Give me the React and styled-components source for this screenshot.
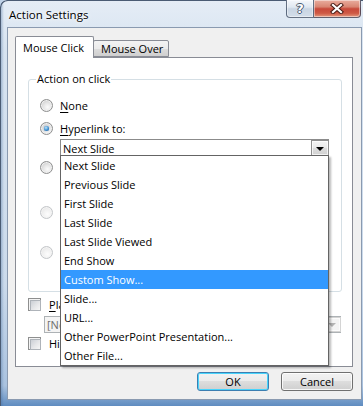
import React from "react";
import styled, { createGlobalStyle } from "styled-components";

const UI_FONT = `"Open Sans", "Noto Sans", "Liberation Sans", sans-serif`;

const GlobalStyle = createGlobalStyle`
	html, body {
		margin: 0;
		padding: 0;
	}
	body {
		width: 363px;
		height: 406px;
		overflow: hidden;
		background: #bfd2e8;
	}
	* {
		box-sizing: border-box;
	}
`;

const Window = styled.div`
	width: 363px;
	height: 406px;
	display: flex;
	flex-direction: column;
	padding: 0 1px 6px 7px;
	border-top-left-radius: 7px;
	box-shadow: inset 1px 1px 0 #4b5c74;
	background:
		linear-gradient(90deg, rgba(60, 100, 150, 0.45) 0, rgba(255, 255, 255, 0) 4px),
		linear-gradient(180deg, #e5edf6 0%, #d7e3f0 12%, #cbdaeb 70%, #a9c2df 95%, #5f8cc0 100%);
	font-family: ${UI_FONT};
	font-size: 11px;
	color: #000;
`;

const TitleBar = styled.div`
	height: 27px;
	flex: none;
	display: flex;
	justify-content: space-between;
	align-items: flex-start;
`;

const Title = styled.div`
	padding: 7px 0 0 2px;
	font-size: 11.5px;
	line-height: 16px;
	text-shadow: 0 0 6px #fff, 0 0 3px #fff;
`;

const Caption = styled.div`
	display: flex;
	margin-right: 1px;
`;

const CaptionButton = styled.div`
	height: 18px;
	width: ${(p) => p.$w}px;
	display: flex;
	align-items: center;
	justify-content: center;
	border: 1px solid rgba(55, 70, 92, 0.75);
	border-top: none;
	border-left-width: ${(p) => (p.$close ? 0 : 1)}px;
	border-radius: ${(p) => (p.$close ? "0 0 4px 0" : "0 0 0 4px")};
	background: ${(p) =>
		p.$close
			? "linear-gradient(180deg, #e9ad9f 0%, #d98673 40%, #c8493a 52%, #cf5a45 78%, #e49a7f 100%)"
			: "linear-gradient(180deg, #f4f7fb 0%, #e0e8f1 42%, #c9d5e3 52%, #d3deea 100%)"};
	box-shadow: inset 0 0 0 1px rgba(255, 255, 255, 0.45);
`;

const HelpGlyph = styled.span`
	font-family: "DejaVu Sans", sans-serif;
	font-weight: bold;
	font-size: 13px;
	line-height: 1;
	color: #fff;
	text-shadow: -1px 0 #485a70, 1px 0 #485a70, 0 -1px #485a70, 0 1px #485a70;
`;

const Client = styled.div`
	flex: 1;
	display: flex;
	flex-direction: column;
	background: #f0f0f0;
	border: 1px solid #8a9ab0;
	padding: 8px 8px 8px 7px;
`;

const TabStrip = styled.div`
	height: 21px;
	flex: none;
	display: flex;
	align-items: flex-end;
	position: relative;
	z-index: 1;
`;

const Tab = styled.div`
	height: ${(p) => (p.$active ? 22 : 17)}px;
	margin-bottom: ${(p) => (p.$active ? -1 : 0)}px;
	margin-left: ${(p) => (p.$active ? 0 : -1)}px;
	padding: ${(p) => (p.$active ? "3px 9px 0 7px" : "0 5px 0 7px")};
	line-height: 16px;
	border: 1px solid #898c95;
	border-bottom: ${(p) => (p.$active ? "none" : "1px solid #898c95")};
	background: ${(p) =>
		p.$active ? "#fff" : "linear-gradient(180deg, #f3f3f3 0%, #ebebeb 50%, #dddddd 51%, #cfcfcf 100%)"};
	border-radius: 2px 2px 0 0;
	white-space: nowrap;
`;

const TabPanel = styled.div`
	flex: 1;
	display: flex;
	flex-direction: column;
	background: #fff;
	border: 1px solid #898c95;
	padding: 0 10px 0 12px;
`;

const GroupBox = styled.fieldset`
	margin: 14px 0 0 0;
	padding: 12px 8px 11px 7px;
	min-width: 0;
	border: 1px solid #d5dfe5;
	border-radius: 3px;
	display: flex;
	flex-direction: column;
`;

const Legend = styled.legend`
	padding: 0 1px;
	line-height: 14px;
`;

const OptionRow = styled.label`
	height: 15px;
	margin-top: ${(p) => p.$mt || 0}px;
	padding-left: 4px;
	display: flex;
	align-items: center;
	gap: 7px;
	line-height: 15px;
	color: ${(p) => (p.$disabled ? "#6d6d6d" : "#000")};
`;

const Radio = styled.span`
	position: relative;
	width: 13px;
	height: 13px;
	flex: none;
	border-radius: 50%;
	border: 1px solid ${(p) => (p.$disabled ? "#c3c6c9" : "#8e8f8f")};
	background: ${(p) =>
		p.$disabled
			? "radial-gradient(circle at 60% 65%, #fdfdfd 0%, #f1f1f1 45%, #dedede 100%)"
			: "radial-gradient(circle at 60% 65%, #fbfbfb 0%, #e4e4e4 45%, #bcbcbc 100%)"};
	box-shadow: inset 0 0 0 1px ${(p) => (p.$disabled ? "#f4f4f4" : "#f0f0f0")};

	&::after {
		content: "";
		display: ${(p) => (p.$checked ? "block" : "none")};
		position: absolute;
		left: 3px;
		top: 3px;
		width: 5px;
		height: 5px;
		border-radius: 50%;
		background: radial-gradient(circle at 40% 35%, #bfe6fb 0%, #3d8fd1 55%, #124f8c 100%);
		box-shadow: 0 0 1px #1b4f86;
	}
`;

const Key = styled.u`
	text-decoration-thickness: 1px;
	text-underline-offset: 2px;
`;

const Combo = styled.div`
	position: relative;
	height: ${(p) => p.$h || 18}px;
	width: ${(p) => p.$w}px;
	margin-top: ${(p) => p.$mt || 0}px;
	margin-left: ${(p) => p.$ml || 0}px;
	flex: none;
	display: flex;
	align-items: center;
	border: 1px solid ${(p) => (p.$disabled ? "#adb2b5" : "#8b8b8b")};
	background: ${(p) => (p.$disabled ? "#f4f4f4" : "#fff")};
	color: ${(p) => (p.$disabled ? "#6d6d6d" : "#000")};
`;

const ComboText = styled.span`
	flex: 1;
	padding-left: 2px;
	line-height: 15px;
	white-space: nowrap;
	overflow: hidden;
`;

const ArrowButton = styled.span`
	width: 18px;
	height: 100%;
	flex: none;
	display: flex;
	align-items: center;
	justify-content: center;
	border: 1px solid ${(p) => (p.$disabled ? "#d4d4d4" : "#8f8f8f")};
	margin: -1px -1px -1px 0;
	background: ${(p) =>
		p.$disabled ? "#f4f4f4" : "linear-gradient(180deg, #f4f4f4 0%, #e9e9e9 50%, #dcdcdc 51%, #d2d2d2 100%)"};
	box-shadow: inset 0 0 0 1px rgba(255, 255, 255, 0.7);

	&::before {
		content: "";
		border-left: 4px solid transparent;
		border-right: 4px solid transparent;
		border-top: 4px solid ${(p) => (p.$disabled ? "#b4b4b4" : "#000")};
		margin-top: 1px;
	}
`;

const DropList = styled.ul`
	position: absolute;
	top: 100%;
	left: -1px;
	width: calc(100% + 2px);
	margin: -1px 0 0 0;
	padding: 0;
	list-style: none;
	background: #fff;
	border: 1px solid #646464;
	box-shadow: 2px 2px 2px rgba(0, 0, 0, 0.28);
	z-index: 5;
`;

const DropItem = styled.li`
	height: 19px;
	padding-left: 3px;
	line-height: 19px;
	white-space: nowrap;
	background: ${(p) => (p.$selected ? "#3399ff" : "transparent")};
	color: ${(p) => (p.$selected ? "#fff" : "#000")};
`;

const Field = styled.div`
	height: ${(p) => p.$h}px;
	margin-top: ${(p) => p.$mt || 0}px;
	margin-left: 24px;
	width: 269px;
	flex: none;
	border: 1px solid #abadb3;
	background: #fff;
`;

const CheckRow = styled.label`
	height: 15px;
	margin-top: ${(p) => p.$mt || 0}px;
	display: flex;
	align-items: center;
	gap: 8px;
	line-height: 15px;
`;

const CheckBox = styled.span`
	width: 13px;
	height: 13px;
	flex: none;
	border: 1px solid #8e8f8f;
	padding: 1px;
	background: #f4f4f4;

	&::before {
		content: "";
		display: block;
		width: 100%;
		height: 100%;
		border: 1px solid #aeb3b9;
		background: linear-gradient(135deg, #cbcfd5 0%, #e6e7e9 55%, #f6f6f6 100%);
	}
`;

const ButtonRow = styled.div`
	height: 19px;
	margin-top: 5px;
	flex: none;
	display: flex;
	justify-content: flex-end;
	gap: 12px;
`;

const Button = styled.button`
	width: 72px;
	height: 19px;
	padding: 0;
	font: inherit;
	font-size: 11px;
	color: #000;
	border-radius: 3px;
	border: 1px solid ${(p) => (p.$default ? "#3c7fb1" : "#707070")};
	background: linear-gradient(180deg, #f2f2f2 0%, #ebebeb 49%, #dddddd 50%, #cfcfcf 100%);
	box-shadow: inset 0 0 0 1px ${(p) => (p.$default ? "#48d4fc" : "rgba(255,255,255,0.8)")};
`;

const LINKS = [
	"Next Slide",
	"Previous Slide",
	"First Slide",
	"Last Slide",
	"Last Slide Viewed",
	"End Show",
	"Custom Show...",
	"Slide...",
	"URL...",
	"Other PowerPoint Presentation...",
	"Other File...",
];

function CloseGlyph() {
	return (
		<svg width="14" height="11" viewBox="0 0 14 11">
			<path d="M3 2 L11 9 M11 2 L3 9" stroke="#4b1d16" strokeWidth="4.2" strokeLinecap="square" />
			<path d="M3 2 L11 9 M11 2 L3 9" stroke="#fff" strokeWidth="2.2" strokeLinecap="square" />
		</svg>
	);
}

export default function App() {
	return (
		<>
			<GlobalStyle />
			<Window>
				<TitleBar>
					<Title>Action Settings</Title>
					<Caption>
						<CaptionButton $w={28}>
							<HelpGlyph>?</HelpGlyph>
						</CaptionButton>
						<CaptionButton $w={47} $close>
							<CloseGlyph />
						</CaptionButton>
					</Caption>
				</TitleBar>
				<Client>
					<TabStrip>
						<Tab $active>Mouse Click</Tab>
						<Tab>Mouse Over</Tab>
					</TabStrip>
					<TabPanel>
						<GroupBox>
							<Legend>Action on click</Legend>
							<OptionRow>
								<Radio />
								<span>
									<Key>N</Key>one
								</span>
							</OptionRow>
							<OptionRow $mt={8}>
								<Radio $checked />
								<span>
									<Key>H</Key>yperlink to:
								</span>
							</OptionRow>
							<Combo $w={269} $ml={24} $mt={3}>
								<ComboText>Next Slide</ComboText>
								<ArrowButton />
								<DropList>
									{LINKS.map((l) => (
										<DropItem key={l} $selected={l === "Custom Show..."}>
											{l}
										</DropItem>
									))}
								</DropList>
							</Combo>
							{/* the labels of these three options sit under the open list */}
							<OptionRow $mt={3} aria-label="Run program">
								<Radio />
							</OptionRow>
							<Field $h={19} $mt={3} />
							<OptionRow $mt={8} $disabled aria-label="Run macro">
								<Radio $disabled />
							</OptionRow>
							<Field $h={17} $mt={3} />
							<OptionRow $mt={5} $disabled aria-label="Object action">
								<Radio $disabled />
							</OptionRow>
							<Field $h={17} $mt={3} />
						</GroupBox>
						<CheckRow $mt={5}>
							<CheckBox />
							<span>
								<Key>P</Key>lay sound:
							</span>
						</CheckRow>
						<Combo $w={297} $h={17} $ml={16} $mt={4} $disabled>
							<ComboText>[No Sound]</ComboText>
							<ArrowButton $disabled />
						</Combo>
						<CheckRow $mt={3}>
							<CheckBox />
							<span>
								Highli<Key>g</Key>ht click
							</span>
						</CheckRow>
					</TabPanel>
					<ButtonRow>
						<Button $default>OK</Button>
						<Button>Cancel</Button>
					</ButtonRow>
				</Client>
			</Window>
		</>
	);
}
